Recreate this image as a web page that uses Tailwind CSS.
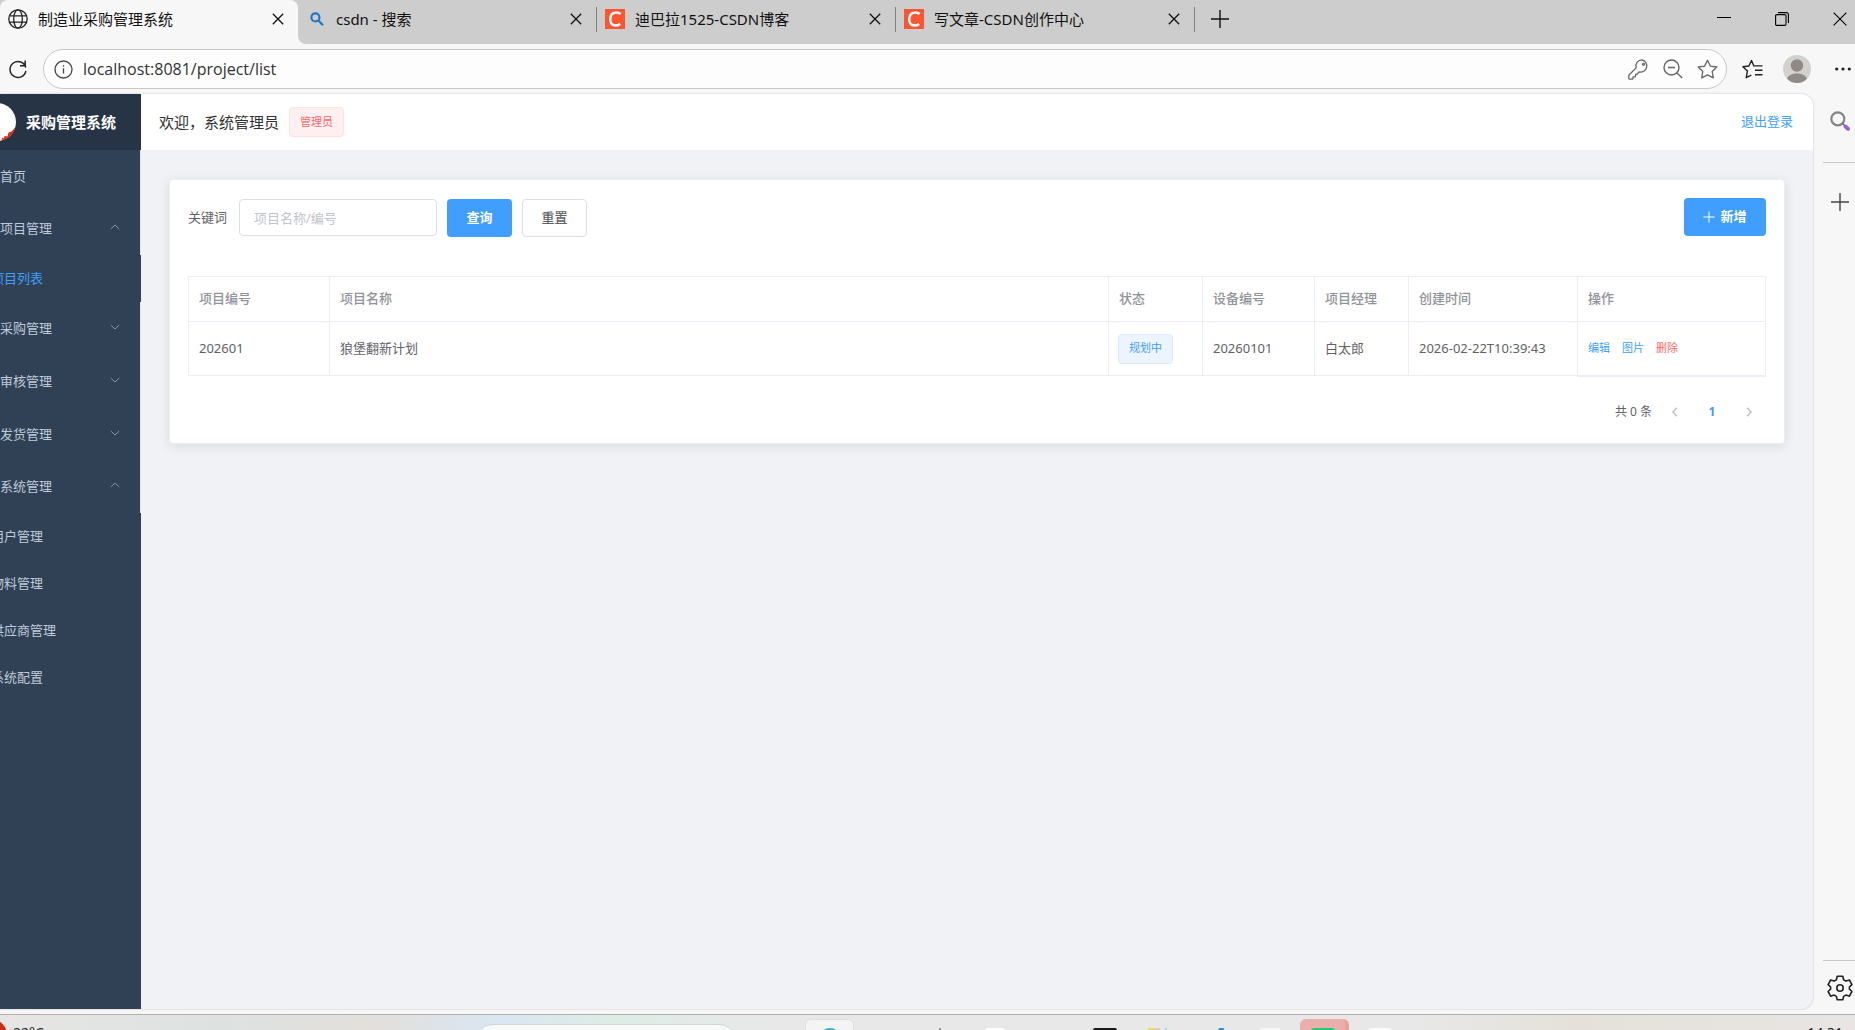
<!DOCTYPE html>
<html lang="zh-CN">
  <head>
    <meta charset="UTF-8" />
    <meta name="viewport" content="width=device-width, initial-scale=1.0" />
    <title>制造业采购管理系统</title>
    <script src="https://cdn.jsdelivr.net/npm/@tailwindcss/browser@4"></script>
  </head>
  <body
    class="flex h-screen flex-col overflow-hidden bg-[#f7f7f7] font-['Noto_Sans','Noto_Sans_CJK_SC',sans-serif] text-[13px] text-[#606266]"
  >
    <!-- Tab strip -->
    <div class="flex h-11 flex-none text-[15px] leading-5 text-[#111]">
      <div class="w-[298px] flex-none bg-[#cdcdcd]">
        <div class="flex h-11 items-center rounded-t-lg bg-[#f7f7f7] pr-3 pb-1.5 pl-2">
          <svg class="size-5 flex-none" viewBox="0 0 20 20" fill="none" stroke="#222" stroke-width="1.3">
            <circle cx="10" cy="10" r="9.2" />
            <ellipse cx="10" cy="10" rx="4.3" ry="9.2" />
            <path d="M1.5 6.8h17M1.5 13.2h17" />
          </svg>
          <button class="ml-[10px] flex-1 text-left">制造业采购管理系统</button>
          <button aria-label="关闭标签页" class="grid size-4 place-items-center">
            <svg class="size-3" viewBox="0 0 12 12" stroke="#111" stroke-width="1.3"><path d="M.8.8l10.4 10.4M11.2.8L.8 11.2" /></svg>
          </button>
        </div>
      </div>
      <div class="flex min-w-0 flex-1 items-center rounded-bl-lg bg-[#cdcdcd] pb-1.5">
        <div class="flex h-[25px] w-[299px] items-center border-r border-[#808080] pr-3 pl-3">
          <svg class="size-[14px] flex-none" viewBox="0 0 14 14" fill="none" stroke="#1f78c8" stroke-width="2.2">
            <circle cx="5.4" cy="5.4" r="4" /><path d="M8.4 8.4l4.6 4.8" />
          </svg>
          <button class="ml-3 flex-1 text-left">csdn - 搜索</button>
          <button aria-label="关闭标签页" class="grid size-4 place-items-center">
            <svg class="size-3" viewBox="0 0 12 12" stroke="#111" stroke-width="1.3"><path d="M.8.8l10.4 10.4M11.2.8L.8 11.2" /></svg>
          </button>
        </div>
        <div class="flex h-[25px] w-[299px] items-center border-r border-[#808080] pr-3 pl-2">
          <svg class="size-5 flex-none" viewBox="0 0 20 20" fill="none">
            <path fill="#fc5531" d="M0 0h20v20H0z" />
            <path stroke="#fff" stroke-width="2.5" d="M15.7 5.1C14 3.8 12.300 3.300 10.500 3.600 7 4.100 5.200 7.200 5.200 10.600c0 3.400 2 5.900 5.200 5.900 1.700 0 3.300-.5 4.700-1.600" />
          </svg>
          <button class="ml-[10px] flex-1 text-left">迪巴拉1525-CSDN博客</button>
          <button aria-label="关闭标签页" class="grid size-4 place-items-center">
            <svg class="size-3" viewBox="0 0 12 12" stroke="#111" stroke-width="1.3"><path d="M.8.8l10.4 10.4M11.2.8L.8 11.2" /></svg>
          </button>
        </div>
        <div class="flex h-[25px] w-[299px] items-center border-r border-[#808080] pr-3 pl-2">
          <svg class="size-5 flex-none" viewBox="0 0 20 20" fill="none">
            <path fill="#fc5531" d="M0 0h20v20H0z" />
            <path stroke="#fff" stroke-width="2.5" d="M15.7 5.1C14 3.8 12.300 3.300 10.500 3.600 7 4.100 5.200 7.200 5.200 10.600c0 3.400 2 5.900 5.200 5.900 1.700 0 3.300-.5 4.700-1.600" />
          </svg>
          <button class="ml-[10px] flex-1 text-left">写文章-CSDN创作中心</button>
          <button aria-label="关闭标签页" class="grid size-4 place-items-center">
            <svg class="size-3" viewBox="0 0 12 12" stroke="#111" stroke-width="1.3"><path d="M.8.8l10.4 10.4M11.2.8L.8 11.2" /></svg>
          </button>
        </div>
        <button aria-label="新建标签页" class="ml-4">
          <svg class="size-[18px]" viewBox="0 0 18 18" stroke="#111" stroke-width="1.4"><path d="M9 0v18M0 9h18" /></svg>
        </button>
        <div class="ml-auto flex gap-11 pr-2">
          <button aria-label="最小化">
            <svg class="size-[14px]" viewBox="0 0 14 14" stroke="#000"><path d="M0 5.500h14" /></svg>
          </button>
          <button aria-label="还原">
            <svg class="size-[14px]" viewBox="0 0 14 14" fill="none" stroke="#000" stroke-width="1.1">
              <rect x=".6" y="2.600" width="10.400" height="10.800" rx="1.200" />
              <path d="M3 .6h8.400a2 2 0 012 2V11" />
            </svg>
          </button>
          <button aria-label="关闭">
            <svg class="size-[14px]" viewBox="0 0 14 14" stroke="#000" stroke-width="1.1"><path d="M.6.6l12.800 12.800M13.400.6L.6 13.400" /></svg>
          </button>
        </div>
      </div>
    </div>

    <!-- Address bar -->
    <div class="flex h-[50px] flex-none items-center pr-1 pl-2">
      <button aria-label="刷新">
        <svg class="size-5" viewBox="0 0 20 20" fill="none" stroke="#222" stroke-width="1.5">
          <path d="M17.800 8.500A8 8 0 1017.900 12M17.200 1.500v5.300h-5.300" />
        </svg>
      </button>
      <div class="ml-[15px] flex h-10 flex-1 items-center rounded-full border border-[#c8c8c8] bg-[#fdfdfd] pr-2 pl-[10px]">
        <svg class="size-[19px] flex-none" viewBox="0 0 19 19" fill="none" stroke="#444" stroke-width="1.3">
          <circle cx="9.500" cy="9.500" r="8.500" /><path d="M9.500 8.300v5.200M9.500 5.200v1.600" />
        </svg>
        <input
          aria-label="地址栏"
          value="localhost:8081/project/list"
          class="ml-[10px] min-w-0 flex-1 bg-transparent font-['Open_Sans',sans-serif] text-base text-[#333] outline-none"
        />
        <div class="flex items-center gap-[14px]">
          <button aria-label="密码">
            <svg class="size-[21px]" viewBox="0 0 21 21" fill="none" stroke="#666" stroke-width="1.300" stroke-linejoin="round">
              <path d="M14 .9a6.200 6.200 0 00-5.900 8L1.200 15.800c-.3.3-.4.6-.4 1v2.400c0 .6.4 1 1 1h2.300c.5 0 .9-.4.9-.9v-1.500h1.600c.5 0 .9-.4.900-.9v-1.600h1.400l2.200-2.300A6.200 6.200 0 1014 .9z" />
              <circle cx="15.500" cy="5.300" r="1" />
            </svg>
          </button>
          <button aria-label="缩小">
            <svg class="size-5" viewBox="0 0 20 20" fill="none" stroke="#666" stroke-width="1.400">
              <circle cx="8.500" cy="8.500" r="7.500" /><path d="M5 8.500h7M14 14l5.200 5" />
            </svg>
          </button>
          <button aria-label="收藏">
            <svg class="size-[21px]" viewBox="0 0 21 21" fill="none" stroke="#666" stroke-width="1.300" stroke-linejoin="round">
              <path d="M10.500 1.300l2.900 5.800 6.400.9-4.600 4.500 1.100 6.400-5.800-3-5.800 3 1.100-6.400L1.200 8l6.400-.9z" />
            </svg>
          </button>
        </div>
      </div>
      <div class="flex items-center pl-[15px]">
        <button aria-label="收藏夹">
          <svg class="size-[21px]" viewBox="0 0 21 21" fill="none" stroke="#222" stroke-width="1.400" stroke-linejoin="round">
            <path d="M12.800 7h-.9L9.500 1.500 6.900 7 .9 7.800l4.500 4.300-1.200 6.600 5.100-2.500M13 6.900h7.500M13 11.300h7.500M13 15.700h7.500" />
          </svg>
        </button>
        <button aria-label="个人资料" class="ml-5">
          <svg class="size-7" viewBox="0 0 28 28">
            <circle cx="14" cy="14" r="14" fill="#d3d1cd" />
            <circle cx="14" cy="10.500" r="6.200" fill="#8f8a86" />
            <path fill="#8f8a86" d="M4 23.700c1.700-3.700 5.500-5.200 10-5.200s8.300 1.500 10 5.200a14 14 0 01-20 0z" />
          </svg>
        </button>
        <button aria-label="设置及其他" class="ml-6">
          <svg class="h-4 w-4" viewBox="0 0 16 16" fill="#222">
            <circle cx="1.700" cy="8" r="1.600" /><circle cx="8" cy="8" r="1.600" /><circle cx="14.300" cy="8" r="1.600" />
          </svg>
        </button>
      </div>
    </div>

    <div class="flex min-h-0 flex-1 pb-[5px]">
      <div class="flex min-w-0 flex-1 overflow-hidden rounded-r-xl bg-[#f0f2f5] shadow-[0_0_2px_rgba(0,0,0,0.25)]">
        <!-- Sidebar -->
        <aside class="w-[141px] flex-none overflow-hidden bg-[#304156] text-[#bfcbd9]">
          <div class="flex h-14 items-center bg-[#263445]">
            <svg class="h-[38px] w-4 flex-none" viewBox="0 0 16 38">
              <circle cx="-3" cy="19" r="19" fill="#fff" />
              <path fill="#d9301c" d="M15.500 24c-1.500 6-6 11.500-12 13l-2-.5 1-2 1.500 1 .5-2.500 3 .5 1-4 3-1z" />
            </svg>
            <h1 class="ml-[10px] text-[15px] font-bold whitespace-nowrap text-white">采购管理系统</h1>
          </div>
          <nav class="whitespace-nowrap">
            <a href="#" class="flex h-[53px] items-center border-r border-[#e6e6e6]">首页</a>
            <button class="flex h-[52px] w-full items-center justify-between border-r border-[#e6e6e6] pr-5">
              项目管理
              <svg class="mb-1 size-[10px]" viewBox="0 0 10 10" fill="none" stroke="#909399"><path d="M.8 7L5 3l4.200 4" /></svg>
            </button>
            <a href="#" class="-ml-[9px] flex h-[47px] items-center text-[#409eff]">项目列表</a>
            <button class="flex h-[53px] w-full items-center justify-between border-r border-[#e6e6e6] pr-5">
              采购管理
              <svg class="mb-1 size-[10px]" viewBox="0 0 10 10" fill="none" stroke="#909399"><path d="M.8 3L5 7l4.200-4" /></svg>
            </button>
            <button class="flex h-[53px] w-full items-center justify-between border-r border-[#e6e6e6] pr-5">
              审核管理
              <svg class="mb-1 size-[10px]" viewBox="0 0 10 10" fill="none" stroke="#909399"><path d="M.8 3L5 7l4.200-4" /></svg>
            </button>
            <button class="flex h-[53px] w-full items-center justify-between border-r border-[#e6e6e6] pr-5">
              发货管理
              <svg class="mb-1 size-[10px]" viewBox="0 0 10 10" fill="none" stroke="#909399"><path d="M.8 3L5 7l4.200-4" /></svg>
            </button>
            <button class="flex h-[52px] w-full items-center justify-between border-r border-[#e6e6e6] pr-5">
              系统管理
              <svg class="mb-1 size-[10px]" viewBox="0 0 10 10" fill="none" stroke="#909399"><path d="M.8 7L5 3l4.200 4" /></svg>
            </button>
            <a href="#" class="-ml-[9px] flex h-[47px] items-center">用户管理</a>
            <a href="#" class="-ml-[9px] flex h-[47px] items-center">物料管理</a>
            <a href="#" class="-ml-[9px] flex h-[47px] items-center">供应商管理</a>
            <a href="#" class="-ml-[9px] flex h-[47px] items-center">系统配置</a>
          </nav>
        </aside>

        <div class="min-w-0 flex-1">
          <!-- Header -->
          <header class="flex h-14 items-center bg-white pr-5 pl-[18px]">
            <span class="text-[15px] text-[#303133]">欢迎，系统管理员</span>
            <span class="ml-[10px] flex h-[30px] items-center rounded border border-[#fde2e2] bg-[#fef0f0] px-[10px] text-[11px] text-[#f56c6c]">管理员</span>
            <button class="ml-auto text-[#409eff]">退出登录</button>
          </header>

          <main class="px-7 py-[29px]">
            <section class="rounded border border-[#ebeef5] bg-white px-[18px] pt-[18px] pb-4 shadow-[0_2px_12px_rgba(0,0,0,0.1)]">
              <form class="flex items-start">
                <label for="keyword" class="mr-3 leading-[38px]">关键词</label>
                <input
                  id="keyword"
                  type="text"
                  placeholder="项目名称/编号"
                  class="mt-px h-[37px] w-[198px] rounded border border-[#dcdfe6] px-[14px] outline-none placeholder:text-[#c0c4cc]"
                />
                <button type="button" class="mt-px ml-[10px] h-[38px] w-[65px] rounded bg-[#409eff] font-bold text-white">查询</button>
                <button type="reset" class="mt-px ml-[10px] h-[38px] w-[65px] rounded border border-[#dcdfe6] bg-white font-medium">重置</button>
                <button type="button" class="ml-auto flex h-[38px] w-[82px] items-center justify-center gap-[5px] rounded bg-[#409eff] font-bold text-white">
                  <svg class="size-3" viewBox="0 0 12 12" stroke="#fff"><path d="M6 .5v11M.5 6h11" /></svg>
                  新增
                </button>
              </form>

              <table class="mt-[39px] w-full table-fixed border-collapse text-left">
                <colgroup>
                  <col class="w-[141px]" />
                  <col />
                  <col class="w-[94px]" />
                  <col class="w-[112px]" />
                  <col class="w-[94px]" />
                  <col class="w-[169px]" />
                  <col class="w-[188px]" />
                </colgroup>
                <thead class="text-[#909399]">
                  <tr class="h-[45px]">
                    <th class="border border-[#ebeef5] px-[10px] font-medium">项目编号</th>
                    <th class="border border-[#ebeef5] px-[10px] font-medium">项目名称</th>
                    <th class="border border-[#ebeef5] px-[10px] font-medium">状态</th>
                    <th class="border border-[#ebeef5] px-[10px] font-medium">设备编号</th>
                    <th class="border border-[#ebeef5] px-[10px] font-medium">项目经理</th>
                    <th class="border border-[#ebeef5] px-[10px] font-medium">创建时间</th>
                    <th class="border border-[#ebeef5] px-[10px] font-medium">操作</th>
                  </tr>
                </thead>
                <tbody>
                  <tr class="h-[54px]">
                    <td class="border border-[#ebeef5] px-[10px]">202601</td>
                    <td class="border border-[#ebeef5] px-[10px]">狼堡翻新计划</td>
                    <td class="border border-[#ebeef5] px-[9px]">
                      <span class="inline-flex h-[30px] items-center rounded border border-[#d9ecff] bg-[#ecf5ff] px-[10px] align-middle text-[11px] text-[#409eff]">规划中</span>
                    </td>
                    <td class="border border-[#ebeef5] px-[10px]">20260101</td>
                    <td class="border border-[#ebeef5] px-[10px]">白太郎</td>
                    <td class="border border-[#ebeef5] px-[10px]">2026-02-22T10:39:43</td>
                    <td class="border border-b-2 border-[#ebeef5] px-[10px] text-[11px]">
                      <div class="flex gap-3">
                        <button class="text-[#409eff]">编辑</button>
                        <button class="text-[#409eff]">图片</button>
                        <button class="text-[#f56c6c]">删除</button>
                      </div>
                    </td>
                  </tr>
                </tbody>
              </table>

              <!-- Pagination -->
              <div class="mt-5 flex h-[30px] items-center justify-end pr-3 text-xs">
                <span>共 0 条</span>
                <button aria-label="上一页" class="ml-[18px]">
                  <svg class="size-[10px]" viewBox="0 0 10 10" fill="none" stroke="#c0c4cc" stroke-width="1.600"><path d="M7 .8L3 5l4 4.200" /></svg>
                </button>
                <button class="w-16 text-center font-bold text-[#409eff]">1</button>
                <button aria-label="下一页">
                  <svg class="size-[10px]" viewBox="0 0 10 10" fill="none" stroke="#c0c4cc" stroke-width="1.600"><path d="M3 .8L7 5 3 9.200" /></svg>
                </button>
              </div>
            </section>
          </main>
        </div>
      </div>

      <!-- Browser side rail -->
      <div class="flex w-[42px] flex-none flex-col items-end pt-4 pb-2">
        <button aria-label="搜索" class="mr-1">
          <svg class="size-[22px]" viewBox="0 0 22 22" fill="none">
            <circle cx="8.800" cy="8.800" r="6.500" stroke="#858585" stroke-width="2.200" />
            <path stroke="#666" stroke-width="1.600" d="M13.500 13.500l2 2" />
            <path stroke="#9468d0" stroke-width="4" stroke-linecap="round" d="M16.500 16.500l2.500 2.400" />
          </svg>
        </button>
        <hr class="mt-[30px] w-8 border-[#c8c8c8]" />
        <button aria-label="添加" class="mt-[30px] mr-[6px]">
          <svg class="size-[18px]" viewBox="0 0 18 18" stroke="#444" stroke-width="1.400"><path d="M9 0v18M0 9h18" /></svg>
        </button>
        <hr class="mt-auto w-8 border-[#c8c8c8]" />
        <button aria-label="设置" class="mt-[14px] mr-[2px]">
          <svg class="size-[26px]" viewBox="0 0 26 26" fill="none" stroke="#222" stroke-width="1.600" stroke-linejoin="round">
            <path d="M10.200 1.200h5.600l.8 3.600 2.300 1.300 3.500-1.100 2.500 4.700-2.500 2.300v2.200l2.500 2.300-2.500 4.700-3.500-1.100-2.300 1.300-.8 3.400h-5.600l-.8-3.400-2.300-1.300-3.500 1.100-2.500-4.700 2.500-2.300V12L1.100 9.700 3.600 5l3.500 1.100 2.300-1.300z" />
            <circle cx="13" cy="13" r="3.200" />
          </svg>
        </button>
      </div>
    </div>

    <!-- Taskbar -->
    <footer
      class="flex h-4 flex-none items-start overflow-hidden border-t border-[#b0b0b0] bg-[linear-gradient(90deg,#e6e6e4_0%,#dde2e1_12%,#e3dfdb_20%,#dae6f2_27%,#deece6_33%,#e8e8e8_42%,#e8e8e8_76%,#e5e1da_85%,#e8e5e3_100%)]"
    >
      <div class="flex w-[475px] flex-none items-start">
        <svg class="mt-1 h-8 w-[7px] flex-none" viewBox="0 0 7 32"><circle cx="-9" cy="16" r="16" fill="#d02a1e" /></svg>
        <span class="mt-2 ml-[6px] text-sm text-[#222]">22°C</span>
      </div>
      <input aria-label="任务栏搜索" class="mt-[9px] h-9 w-[262px] flex-none rounded-full border border-[#d2d6d6] bg-[#f7faf9]" />
      <div class="ml-[68px] flex flex-none gap-[6px]">
        <button aria-label="Edge" class="mt-1 flex h-12 w-[49px] justify-center rounded-md border border-[#e0e0e0] bg-[#f4f4f4] pt-2">
          <svg class="size-6" viewBox="0 0 24 24"><circle cx="12" cy="12" r="12" fill="#35b8c8" /></svg>
        </button>
        <span class="w-[49px]"></span>
        <span class="w-[49px] pt-[13px]"><svg class="mx-auto h-4 w-[2px]" viewBox="0 0 2 16"><path fill="#999" d="M0 0h2v16H0z" /></svg></span>
        <span class="w-[49px] pt-[13px]"><svg class="mx-auto h-6 w-5" viewBox="0 0 20 24"><rect width="20" height="24" rx="3" fill="#fff" /></svg></span>
        <span class="w-[49px]"></span>
        <span class="w-[49px] pt-[13px]"><svg class="mx-auto size-6" viewBox="0 0 24 24"><rect width="24" height="24" rx="2" fill="#1b1b1b" /></svg></span>
        <span class="w-[49px] pt-[13px]"><svg class="mx-auto size-6" viewBox="0 0 24 24"><path fill="#f2dc55" d="M0 0h11v24H0z" /><path fill="#e9c9bd" d="M6 0h6v24H6z" /><path fill="#a6dcd2" d="M17 0h2v24h-2z" /></svg></span>
        <span class="w-[49px] pt-[13px]"><svg class="mx-auto size-6" viewBox="0 0 24 24"><path fill="#2e9cc8" d="M16 0h5l3 24H8z" /></svg></span>
        <span class="w-[49px] pt-[13px]"><svg class="mx-auto h-6 w-5" viewBox="0 0 20 24"><path fill="#f5f5f5" d="M0 0h20v24H0z" /></svg></span>
        <button aria-label="微信" class="mt-1 flex h-12 w-[49px] justify-center rounded-md border-r-4 border-[#e9a19b] bg-[#eaafaa] pt-[9px]">
          <svg class="size-6" viewBox="0 0 24 24"><rect width="24" height="24" rx="3" fill="#1fce6d" /></svg>
        </button>
        <span class="w-[49px] pt-[13px]"><svg class="mx-auto size-6" viewBox="0 0 24 24"><rect width="24" height="24" rx="3" fill="#fafafa" /></svg></span>
      </div>
      <span class="mt-2 ml-auto pr-3 text-sm text-[#222]">14:31</span>
    </footer>
  </body>
</html>
